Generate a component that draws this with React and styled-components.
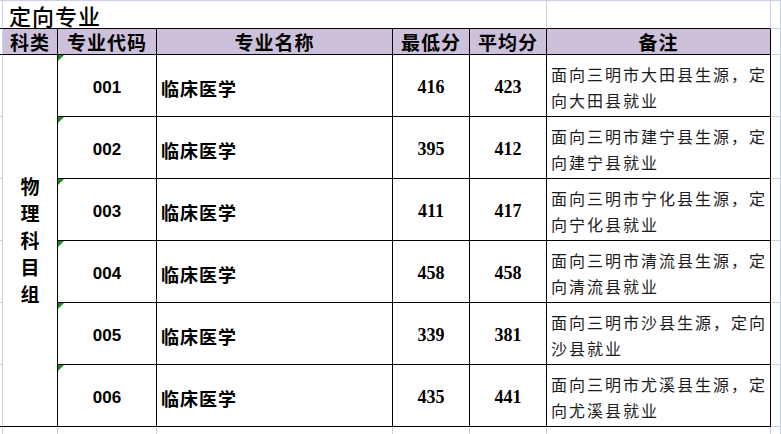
import React from 'react';
import styled, { createGlobalStyle } from 'styled-components';

const GRID = '#c8d1e1';
const INK = '#000';

const GlobalStyle = createGlobalStyle`
  html, body {
    margin: 0;
    padding: 0;
    background: #fff;
  }
  body {
    font-family: "Noto Sans CJK SC", "Noto Sans", sans-serif;
    color: #000;
  }
`;

// The sheet: column A sliver, B..G table, H sliver
const Sheet = styled.div`
  display: grid;
  grid-template-columns: 3px 55px 99px 236px 77px 77px 224px 1fr;
  grid-template-rows: 28px 26px repeat(6, 62px) 1fr;
  height: 100vh;
  box-sizing: border-box;
  border-top: 1px solid ${GRID};
`;

const Cell = styled.div`
  box-sizing: border-box;
  position: relative;
  display: flex;
  align-items: center;
  justify-content: ${(p) => p.$align || 'center'};
  grid-column: span ${(p) => p.$cols || 1};
  grid-row: span ${(p) => p.$rows || 1};
  border-right: 1px solid ${(p) => p.$r || GRID};
  border-bottom: ${(p) => (p.$nob ? 'none' : `1px solid ${p.$b || GRID}`)};
  background: ${(p) => p.$bg || '#fff'};
  overflow: hidden;
`;

const Title = styled(Cell)`
  justify-content: flex-start;
  padding-left: 6px;
  font-size: 22px;
  font-weight: 500;
  letter-spacing: 1px;
  overflow: visible;
`;

const Head = styled(Cell)`
  background: #ccc0da;
  font-size: 19px;
  font-weight: 700;
  letter-spacing: 1px;
`;

const Group = styled(Cell)`
  padding-top: 8px;
  font-size: 19px;
  font-weight: 700;
  writing-mode: vertical-rl;
  text-orientation: upright;
  letter-spacing: 8px;
`;

const Code = styled(Cell)`
  font-family: "Liberation Sans", Arial, sans-serif;
  font-size: 17px;
  font-weight: 700;
  padding-top: 4px;

  &::before {
    content: '';
    position: absolute;
    top: 0;
    left: 0;
    border-top: 6px solid #1f8a1f;
    border-right: 6px solid transparent;
  }
`;

const Name = styled(Cell)`
  justify-content: flex-start;
  padding: 4px 0 0 4px;
  font-size: 18px;
  font-weight: 700;
  letter-spacing: 1px;
`;

const Score = styled(Cell)`
  font-family: "Liberation Serif", "Times New Roman", serif;
  font-size: 18px;
  font-weight: 700;
  padding-top: 4px;
`;

const Note = styled(Cell)`
  justify-content: flex-start;
  padding: 2px 4px 0 4px;
  font-size: 16px;
  line-height: 26px;
  letter-spacing: 2px;
  color: #1c1c1c;
`;

const NoteText = styled.div`
  width: 100%;
`;

const NoteLine = styled.div`
  white-space: nowrap;
  text-align: ${(p) => (p.$fill ? 'justify' : 'left')};
  text-align-last: ${(p) => (p.$fill ? 'justify' : 'left')};
`;

const rows = [
  { code: '001', min: 416, avg: 423, note: ['面向三明市大田县生源，定', '向大田县就业'] },
  { code: '002', min: 395, avg: 412, note: ['面向三明市建宁县生源，定', '向建宁县就业'] },
  { code: '003', min: 411, avg: 417, note: ['面向三明市宁化县生源，定', '向宁化县就业'] },
  { code: '004', min: 458, avg: 458, note: ['面向三明市清流县生源，定', '向清流县就业'] },
  { code: '005', min: 339, avg: 381, note: ['面向三明市沙县生源，定向', '沙县就业'] },
  { code: '006', min: 435, avg: 441, note: ['面向三明市尤溪县生源，定', '向尤溪县就业'] },
];

const headers = ['专业代码', '专业名称', '最低分', '平均分', '备注'];

export default function App() {
  return (
    <>
      <GlobalStyle />
      <Sheet>
        {/* title row */}
        <Cell $b={INK} />
        <Title $cols={5} $b={INK}>定向专业</Title>
        <Cell $b={INK} />
        <Cell />

        {/* header row */}
        <Cell $b={INK} />
        <Head $r={INK} $b={INK}>科类</Head>
        {headers.map((h) => (
          <Head key={h} $r={INK} $b={INK}>{h}</Head>
        ))}
        <Cell />

        {/* data rows */}
        {rows.map((row, i) => (
          <React.Fragment key={row.code}>
            <Cell $b={i === rows.length - 1 ? INK : GRID} />
            {i === 0 && (
              <Group $rows={6} $r={INK} $b={INK}>物理科目组</Group>
            )}
            <Code $r={INK} $b={INK}>{row.code}</Code>
            <Name $r={INK} $b={INK}>临床医学</Name>
            <Score $r={INK} $b={INK}>{row.min}</Score>
            <Score $r={INK} $b={INK}>{row.avg}</Score>
            <Note $r={INK} $b={INK}>
              <NoteText>
                <NoteLine $fill>{row.note[0]}</NoteLine>
                <NoteLine>{row.note[1]}</NoteLine>
              </NoteText>
            </Note>
            <Cell />
          </React.Fragment>
        ))}

        {/* trailing empty row */}
        {Array.from({ length: 8 }, (_, i) => (
          <Cell key={i} $nob />
        ))}
      </Sheet>
    </>
  );
}
